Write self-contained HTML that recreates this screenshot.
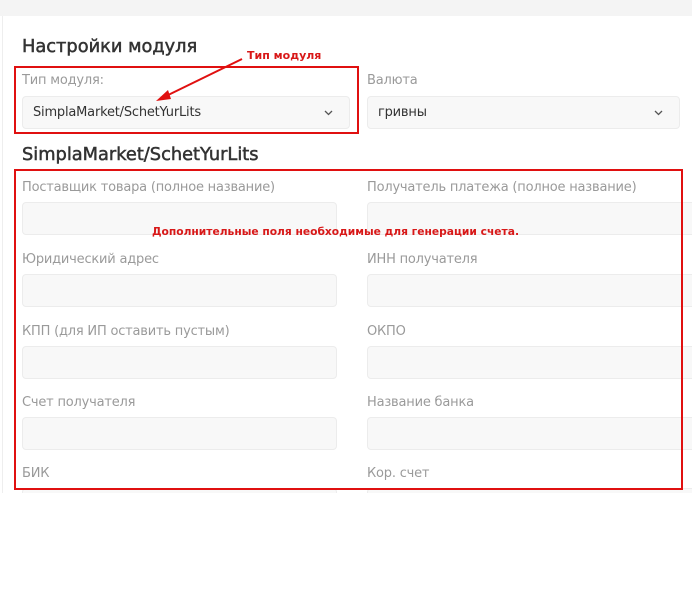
<!DOCTYPE html>
<html><head><meta charset="utf-8"><style>
body{margin:0;width:692px;height:605px;background:#fff;position:relative;overflow:hidden;font-family:"Liberation Sans","DejaVu Sans",sans-serif}
.a{position:absolute}
.top{left:0;top:0;width:692px;height:16px;background:#f4f4f4}
.card{left:2px;top:16px;width:690px;height:477px;background:#fff;border-left:1px solid #eee;overflow:hidden}
h{position:absolute;font-size:17.8px;color:#333;font-weight:normal;-webkit-text-stroke:0.5px #333;font-family:"DejaVu Sans",sans-serif;letter-spacing:0}
.l{position:absolute;font-size:13px;color:#9a9a9a;font-family:"DejaVu Sans",sans-serif;letter-spacing:-0.2px}
.i{position:absolute;height:33px;background:#f8f8f8;border:1px solid #ececec;border-radius:4px;box-sizing:border-box}
.s{font-size:13px;color:#333;font-family:"DejaVu Sans",sans-serif;padding:8px 10px;letter-spacing:-0.2px}
.r{position:absolute;border:2px solid #e01010;box-sizing:border-box}
.chev{position:absolute;right:16px;top:13px}
.red{position:absolute;color:#d81818;font-size:10.7px;font-weight:bold;font-family:"DejaVu Sans",sans-serif}
</style></head><body>
<div class="a top"></div>
<div class="a card"></div>
<h style="left:22px;top:36px">Настройки модуля</h>
<div class="l" style="left:22px;top:73px">Тип модуля:</div>
<div class="i s" style="left:22px;top:96px;width:328px">SimplaMarket/SchetYurLits<svg class="chev" width="9" height="6"><path d="M1 1L4.5 4.5L8 1" stroke="#555" stroke-width="1.3" fill="none"/></svg></div>
<div class="l" style="left:367px;top:73px">Валюта</div>
<div class="i s" style="left:367px;top:96px;width:313px">гривны<svg class="chev" width="9" height="6"><path d="M1 1L4.5 4.5L8 1" stroke="#555" stroke-width="1.3" fill="none"/></svg></div>
<h style="left:22px;top:144px">SimplaMarket/SchetYurLits</h>
<div class="l" style="left:22px;top:180px">Поставщик товара (полное название)</div>
<div class="l" style="left:367px;top:180px">Получатель платежа (полное название)</div>
<div class="i" style="left:22px;top:202px;width:315px"></div>
<div class="i" style="left:367px;top:202px;width:330px"></div>
<div class="l" style="left:22px;top:252px">Юридический адрес</div>
<div class="l" style="left:367px;top:252px">ИНН получателя</div>
<div class="i" style="left:22px;top:274px;width:315px"></div>
<div class="i" style="left:367px;top:274px;width:330px"></div>
<div class="l" style="left:22px;top:324px">КПП (для ИП оставить пустым)</div>
<div class="l" style="left:367px;top:324px">ОКПО</div>
<div class="i" style="left:22px;top:346px;width:315px"></div>
<div class="i" style="left:367px;top:346px;width:330px"></div>
<div class="l" style="left:22px;top:395px">Счет получателя</div>
<div class="l" style="left:367px;top:395px">Название банка</div>
<div class="i" style="left:22px;top:417px;width:315px"></div>
<div class="i" style="left:367px;top:417px;width:330px"></div>
<div class="l" style="left:22px;top:466px">БИК</div>
<div class="l" style="left:367px;top:466px">Кор. счет</div>
<div class="i" style="left:22px;top:488px;width:315px;height:5px;border-bottom:none;border-radius:4px 4px 0 0"></div>
<div class="i" style="left:367px;top:488px;width:330px;height:5px;border-bottom:none;border-radius:4px 4px 0 0"></div>
<div class="a" style="left:0;top:493px;width:692px;height:112px;background:#fff"></div>
<div class="r" style="left:14px;top:66px;width:345px;height:68px"></div>
<div class="r" style="left:14px;top:169px;width:669px;height:321px"></div>
<div class="red" style="left:247px;top:49px;font-size:11px">Тип модуля</div>
<svg class="a" style="left:0;top:0" width="692" height="605"><line x1="242" y1="59" x2="162" y2="98" stroke="#e01010" stroke-width="2"/><polygon points="156,101 168,90 171,99" fill="#e01010"/></svg>
<div class="red" style="left:152px;top:225px">Дополнительные поля необходимые для генерации счета.</div>
</body></html>
